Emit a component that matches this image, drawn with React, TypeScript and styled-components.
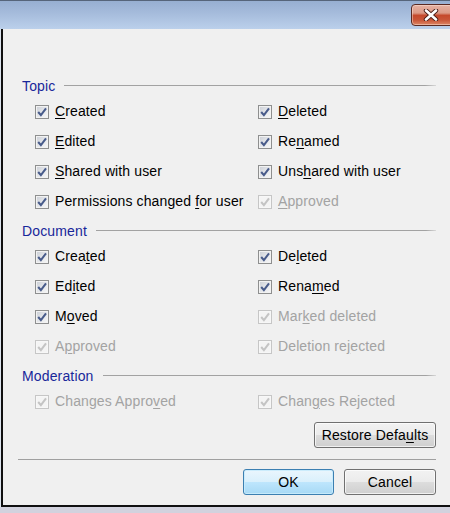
import React from 'react';
import styled, { createGlobalStyle } from 'styled-components';

const Global = createGlobalStyle`
  html, body { margin: 0; padding: 0; }
  body {
    background: #d2d2de;
    width: 450px;
    height: 513px;
    overflow: hidden;
    font-family: "Liberation Sans", Arial, sans-serif;
  }
`;

const Window = styled.div`
  width: 454px;
  height: 507px;
  display: flex;
  flex-direction: column;
  background: #dde4ee;
`;

const TitleBar = styled.div`
  height: 29px;
  box-sizing: border-box;
  border-top: 1px solid #56657a;
  background: linear-gradient(#97afd1 0%, #a6bcdc 45%, #bbd0eb 100%);
  display: flex;
  justify-content: flex-end;
  align-items: flex-start;
  padding-top: 3px;
`;

const CloseButton = styled.div`
  width: 43px;
  height: 22px;
  box-sizing: border-box;
  border: 1px solid #5a2a22;
  border-radius: 4px;
  background: linear-gradient(
    #e6b2a3 0%,
    #dc9a86 40%,
    #c5492c 52%,
    #c95638 75%,
    #dc8666 100%
  );
  box-shadow: inset 0 0 0 1px rgba(255, 235, 225, 0.45);
  display: flex;
  align-items: center;
  justify-content: center;
  padding-right: 3px;
`;

const Body = styled.div`
  flex: 1;
  margin-left: 1px;
  border-left: 2px solid #101010;
  border-bottom: 2px solid #101010;
  background: #f0f0f0;
  padding: 47px 18px 0 15px;
  display: flex;
  flex-direction: column;
`;

const Section = styled.section<{ $first?: boolean }>`
  display: flex;
  flex-direction: column;
  margin-top: ${(p) => (p.$first ? '0' : '5px')};
`;

const Heading = styled.div`
  height: 20px;
  margin-left: 4px;
  display: flex;
  align-items: center;
  gap: 9px;
  font-size: 14px;
  letter-spacing: 0.15px;
  color: #18279a;
  &::after {
    content: '';
    flex: 1;
    height: 1px;
    margin-top: -1px;
    background: linear-gradient(to right, #a2a2a2 97%, #d8d8d8);
  }
`;

const Grid = styled.div`
  display: grid;
  grid-template-columns: 223px 1fr;
  grid-auto-rows: 30px;
  padding-left: 17px;
`;

const Row = styled.label<{ $disabled?: boolean }>`
  display: flex;
  align-items: center;
  gap: 6px;
  font-size: 14px;
  letter-spacing: 0.12px;
  color: ${(p) => (p.$disabled ? '#a3a3a3' : '#000')};
  white-space: nowrap;
`;

const Box = styled.span<{ $disabled?: boolean }>`
  width: 14px;
  height: 14px;
  box-sizing: border-box;
  flex: none;
  margin-top: 1px;
  border: 1px solid ${(p) => (p.$disabled ? '#c6c6c6' : '#8e8f8f')};
  background: ${(p) =>
    p.$disabled
      ? '#f4f4f4'
      : 'linear-gradient(135deg, #c9cdd4 0%, #e4e6ea 50%, #f8f8f8 100%)'};
  box-shadow: inset 0 0 0 1px ${(p) => (p.$disabled ? '#f7f7f7' : '#f2f2f2')};
  display: flex;
  align-items: center;
  justify-content: center;
`;

const Key = styled.span`
  text-decoration: underline;
  text-underline-offset: 2px;
`;

const ButtonBar = styled.div`
  display: flex;
  justify-content: flex-end;
  gap: 10px;
`;

const Button = styled.button<{ $primary?: boolean; $w: number }>`
  width: ${(p) => p.$w}px;
  height: 26px;
  box-sizing: border-box;
  padding: 0;
  font-family: "Liberation Sans", Arial, sans-serif;
  font-size: 14px;
  letter-spacing: 0.15px;
  color: #000;
  border-radius: 3px;
  border: 1px solid ${(p) => (p.$primary ? '#3c7fb1' : '#707070')};
  background: ${(p) =>
    p.$primary
      ? 'linear-gradient(#eaf6fd 0%, #d9f0fc 50%, #bee6fd 50%, #a7d9f5 100%)'
      : 'linear-gradient(#f2f2f2 0%, #ebebeb 50%, #dddddd 50%, #cfcfcf 100%)'};
  box-shadow: inset 0 0 0 1px
    ${(p) => (p.$primary ? 'rgba(200, 235, 252, 0.9)' : 'rgba(255, 255, 255, 0.7)')};
`;

const RestoreBar = styled(ButtonBar)`
  margin-top: 6px;
`;

const Separator = styled.div`
  height: 1px;
  margin-top: 11px;
  background: #a0a0a0;
`;

const FooterBar = styled(ButtonBar)`
  margin-top: 9px;
`;

const Check = ({ disabled }: { disabled?: boolean }) => (
  <svg width="10" height="10" viewBox="0 0 10 10">
    <path
      d="M1.2 5 L3.9 8.2 L9 1.3"
      fill="none"
      stroke={disabled ? '#c4c4c4' : '#485b8a'}
      strokeWidth="2"
      strokeLinejoin="miter"
    />
  </svg>
);

type Item = { pre: string; key?: string; post?: string; disabled?: boolean };

const Option = ({ item }: { item: Item }) => (
  <Row $disabled={item.disabled}>
    <Box $disabled={item.disabled}>
      <Check disabled={item.disabled} />
    </Box>
    <span>
      {item.pre}
      {item.key && <Key>{item.key}</Key>}
      {item.post}
    </span>
  </Row>
);

const topic: Item[] = [
  { pre: '', key: 'C', post: 'reated' },
  { pre: '', key: 'D', post: 'eleted' },
  { pre: '', key: 'E', post: 'dited' },
  { pre: 'Re', key: 'n', post: 'amed' },
  { pre: '', key: 'S', post: 'hared with user' },
  { pre: 'Uns', key: 'h', post: 'ared with user' },
  { pre: 'Permissions changed ', key: 'f', post: 'or user' },
  { pre: '', key: 'A', post: 'pproved', disabled: true },
];

const documentItems: Item[] = [
  { pre: 'Crea', key: 't', post: 'ed' },
  { pre: 'De', key: 'l', post: 'eted' },
  { pre: 'Ed', key: 'i', post: 'ted' },
  { pre: 'Rena', key: 'm', post: 'ed' },
  { pre: 'M', key: 'o', post: 'ved' },
  { pre: 'Mar', key: 'k', post: 'ed deleted', disabled: true },
  { pre: 'A', key: 'p', post: 'proved', disabled: true },
  { pre: 'Deletion re', key: 'j', post: 'ected', disabled: true },
];

const moderation: Item[] = [
  { pre: 'Changes Appro', key: 'v', post: 'ed', disabled: true },
  { pre: 'Chan', key: 'g', post: 'es Rejected', disabled: true },
];

const Group = ({ title, items, first }: { title: string; items: Item[]; first?: boolean }) => (
  <Section $first={first}>
    <Heading>{title}</Heading>
    <Grid>
      {items.map((it, i) => (
        <Option key={i} item={it} />
      ))}
    </Grid>
  </Section>
);

export default function App() {
  return (
    <>
      <Global />
      <Window>
        <TitleBar>
          <CloseButton>
            <svg width="16" height="12" viewBox="0 0 16 12">
              <path d="M3 1.5 L13 10.5 M13 1.5 L3 10.5" stroke="#4a1c14" strokeWidth="4.4" strokeLinecap="round" />
              <path d="M3 1.5 L13 10.5 M13 1.5 L3 10.5" stroke="#ffffff" strokeWidth="2.6" strokeLinecap="round" />
            </svg>
          </CloseButton>
        </TitleBar>
        <Body>
          <Group title="Topic" items={topic} first />
          <Group title="Document" items={documentItems} />
          <Group title="Moderation" items={moderation} />
          <RestoreBar>
            <Button $w={122}>
              Restore Defa<Key>u</Key>lts
            </Button>
          </RestoreBar>
          <Separator />
          <FooterBar>
            <Button $primary $w={91}>OK</Button>
            <Button $w={92}>Cancel</Button>
          </FooterBar>
        </Body>
      </Window>
    </>
  );
}
